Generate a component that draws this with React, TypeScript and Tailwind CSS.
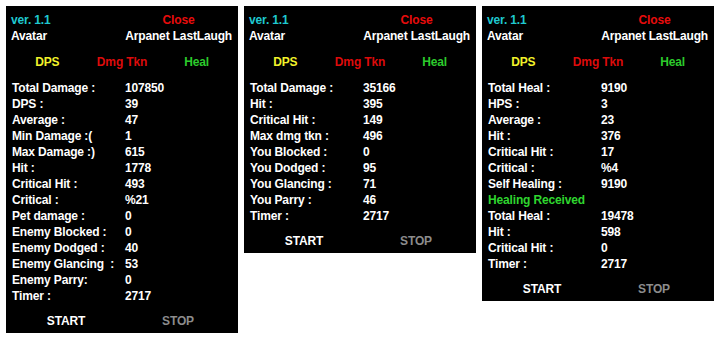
import React from 'react';

type Row = { label: string; value?: string; green?: boolean };

const dpsRows: Row[] = [
    { label: 'Total Damage :', value: '107850' },
    { label: 'DPS :', value: '39' },
    { label: 'Average :', value: '47' },
    { label: 'Min Damage :(', value: '1' },
    { label: 'Max Damage :)', value: '615' },
    { label: 'Hit :', value: '1778' },
    { label: 'Critical Hit :', value: '493' },
    { label: 'Critical :', value: '%21' },
    { label: 'Pet damage :', value: '0' },
    { label: 'Enemy Blocked :', value: '0' },
    { label: 'Enemy Dodged :', value: '40' },
    { label: 'Enemy Glancing  :', value: '53' },
    { label: 'Enemy Parry:', value: '0' },
    { label: 'Timer :', value: '2717' },
];

const takenRows: Row[] = [
    { label: 'Total Damage :', value: '35166' },
    { label: 'Hit :', value: '395' },
    { label: 'Critical Hit :', value: '149' },
    { label: 'Max dmg tkn :', value: '496' },
    { label: 'You Blocked :', value: '0' },
    { label: 'You Dodged :', value: '95' },
    { label: 'You Glancing :', value: '71' },
    { label: 'You Parry :', value: '46' },
    { label: 'Timer :', value: '2717' },
];

const healRows: Row[] = [
    { label: 'Total Heal :', value: '9190' },
    { label: 'HPS :', value: '3' },
    { label: 'Average :', value: '23' },
    { label: 'Hit :', value: '376' },
    { label: 'Critical Hit :', value: '17' },
    { label: 'Critical :', value: '%4' },
    { label: 'Self Healing :', value: '9190' },
    { label: 'Healing Received', green: true },
    { label: 'Total Heal :', value: '19478' },
    { label: 'Hit :', value: '598' },
    { label: 'Critical Hit :', value: '0' },
    { label: 'Timer :', value: '2717' },
];

function Panel({ rows }: { rows: Row[] }) {
    return (
        <div className="w-[232px] bg-black pt-[6px] pb-[4px] text-white">
            {/* header */}
            <div className="grid grid-cols-[111px_1fr] pl-[5px] leading-4">
                <span className="text-[#1fc8cf]">ver. 1.1</span>
                <span className="text-center text-[#e80c0c] pr-[3px]">Close</span>
            </div>
            <div className="flex justify-between px-[5px] pr-[6px] leading-4">
                <span>Avatar</span>
                <span>Arpanet LastLaugh</span>
            </div>

            {/* tabs */}
            <div className="mt-[10px] grid grid-cols-3 px-[4px] text-center leading-4">
                <span className="text-[#f2f22a]">DPS</span>
                <span className="text-[#dd0b0b]">Dmg Tkn</span>
                <span className="text-[#2ccb2c]">Heal</span>
            </div>

            {/* stats */}
            <div className="mt-[10px] flex flex-col pl-[6px]">
                {rows.map((r, i) =>
                    r.green ? (
                        <div key={i} className="leading-4 text-[#2fd62f]">{r.label}</div>
                    ) : (
                        <div key={i} className="grid grid-cols-[113px_1fr] leading-4">
                            <span className="whitespace-pre">{r.label}</span>
                            <span>{r.value}</span>
                        </div>
                    ),
                )}
            </div>

            {/* buttons */}
            <div className="mt-[9px] grid grid-cols-[112px_112px] pl-[4px] text-center leading-4">
                <span>START</span>
                <span className="text-[#8c8c8c]">STOP</span>
            </div>
        </div>
    );
}

export default function App() {
    return (
        <div
            className="flex h-[340px] w-[720px] items-start gap-[6px] bg-white p-[6px] text-[12px] font-bold tracking-[-0.15px]"
            style={{ fontFamily: '"Liberation Sans", Arial, sans-serif' }}
        >
            <Panel rows={dpsRows} />
            <Panel rows={takenRows} />
            <Panel rows={healRows} />
        </div>
    );
}
